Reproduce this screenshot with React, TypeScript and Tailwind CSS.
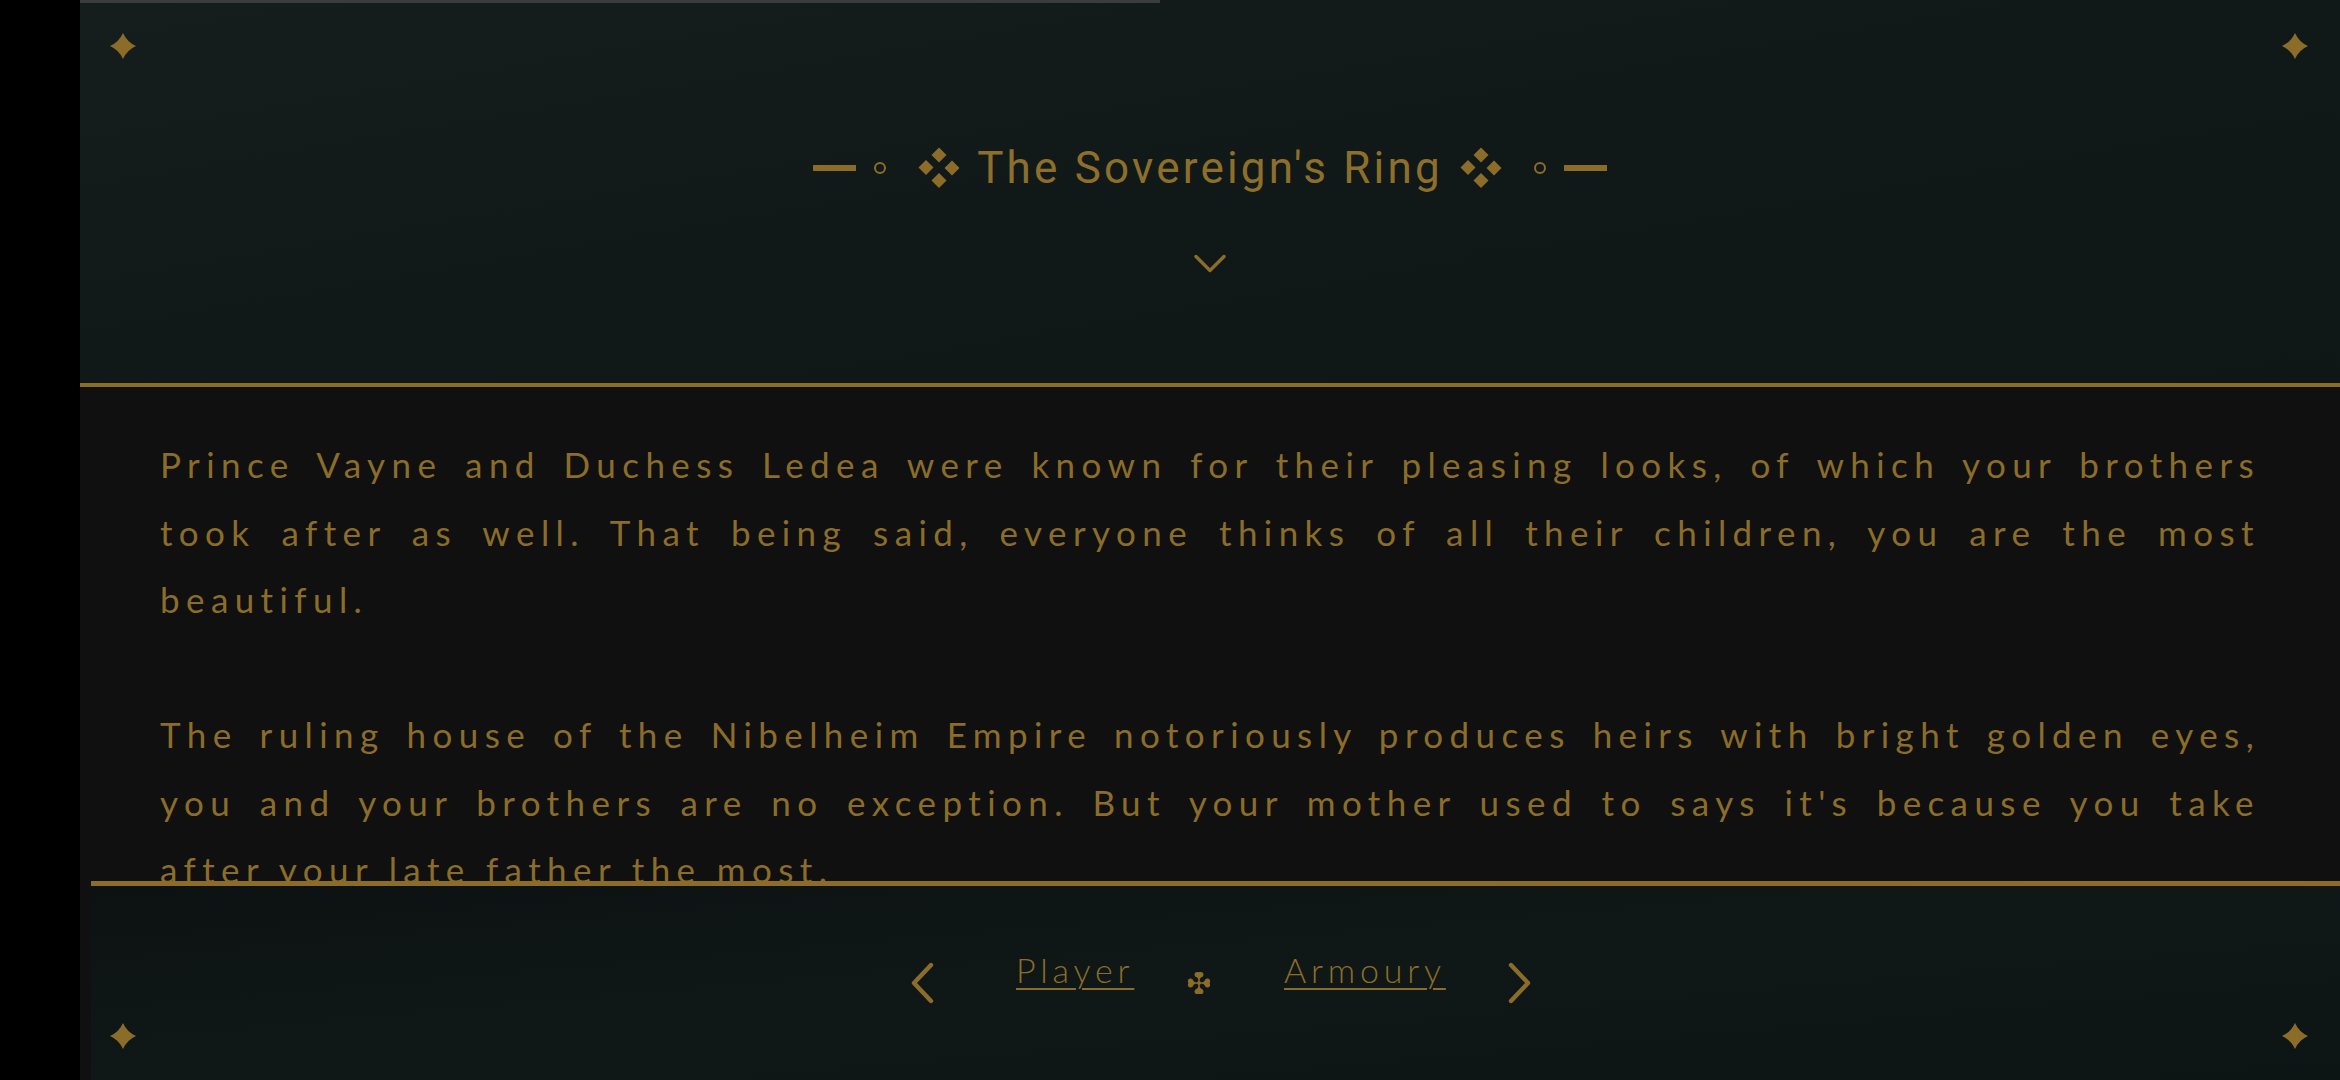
import type { ReactNode } from "react";

const gold = "#8b6d29";

function Star({ className }: { className: string }) {
  return (
    <svg
      viewBox="0 0 26 26"
      className={`absolute h-[26px] w-[26px] ${className}`}
      fill={gold}
    >
      <path d="M13 0 Q17 9 26 13 Q17 17 13 26 Q9 17 0 13 Q9 9 13 0Z" />
    </svg>
  );
}

function Diamonds() {
  // four diamonds, like ❖
  const d = (cx: number, cy: number) =>
    `M${cx} ${cy - 7.5} L${cx + 7.5} ${cy} L${cx} ${cy + 7.5} L${cx - 7.5} ${cy}Z`;
  return (
    <svg viewBox="0 0 42 42" className="h-[42px] w-[42px]" fill={gold}>
      <path d={d(21, 8)} />
      <path d={d(8, 20.5)} />
      <path d={d(34, 21)} />
      <path d={d(21, 33.5)} />
    </svg>
  );
}

function Ornament() {
  return (
    <svg viewBox="0 0 26 28" className="h-[28px] w-[26px]" fill={gold}>
      <path d="M13 3 L13 25 M3 14 L23 14" stroke={gold} strokeWidth="1.6" />
      <circle cx="11.2" cy="5.5" r="2.6" />
      <circle cx="14.8" cy="5.5" r="2.6" />
      <path d="M8.8 6.5 L13 10.5 L17.2 6.5Z" />
      <circle cx="11.2" cy="22.5" r="2.6" />
      <circle cx="14.8" cy="22.5" r="2.6" />
      <path d="M8.8 21.5 L13 17.5 L17.2 21.5Z" />
      <circle cx="4.5" cy="12.2" r="2.6" />
      <circle cx="4.5" cy="15.8" r="2.6" />
      <path d="M5.5 9.8 L9.5 14 L5.5 18.2Z" />
      <circle cx="21.5" cy="12.2" r="2.6" />
      <circle cx="21.5" cy="15.8" r="2.6" />
      <path d="M20.5 9.8 L16.5 14 L20.5 18.2Z" />
      <rect x="11.5" y="12.5" width="3" height="3" />
    </svg>
  );
}

function Line({ children, last }: { children: ReactNode; last?: boolean }) {
  return (
    <span className={`block ${last ? "" : "[text-align-last:justify]"}`}>
      {children}
    </span>
  );
}

export default function App() {
  return (
    <div className="flex h-[1080px] w-[2340px] overflow-hidden bg-black">
      <div className="w-[80px] shrink-0 bg-black" />

      <main className="relative flex flex-1 flex-col overflow-hidden bg-[#101010]">
        {/* scroll progress */}
        <div className="absolute left-0 top-0 z-10 h-[3px] w-[1080px] bg-[#3a3c3d]" />

        <header className="flex h-[387px] shrink-0 flex-col items-center border-b-4 border-[#8b6d29] bg-gradient-to-br from-[#151e1d] via-[#111918] to-[#0e1616] pt-[143px]">
          <div className="flex h-[50px] items-center">
            <div className="h-[6px] w-[43px] bg-[#8b6d29]" />
            <div className="ml-[18px] h-[12px] w-[12px] rounded-full border-2 border-[#8b6d29]" />
            <div className="ml-[32px]">
              <Diamonds />
            </div>
            <h1 className="mx-[17px] font-['Roboto',sans-serif] text-[44px] leading-none tracking-[3.2px] text-[#8d6f2b]">
              The Sovereign's Ring
            </h1>
            <Diamonds />
            <div className="ml-[32px] h-[12px] w-[12px] rounded-full border-2 border-[#8b6d29]" />
            <div className="ml-[18px] h-[6px] w-[43px] bg-[#8b6d29]" />
          </div>
          <svg viewBox="0 0 32 19" className="mt-[61px] h-[19px] w-[32px]" fill="none">
            <path d="M2 2.5 L16 16.5 L30 2.5" stroke={gold} strokeWidth="3.4" strokeLinecap="round" strokeLinejoin="round" />
          </svg>
        </header>

        <section className="flex-1 overflow-hidden px-[80px] pt-[44px] font-['Lato',sans-serif] text-[35px] leading-[67.5px] tracking-[6.4px] text-[#8b6d29]">
          <p className="mb-[67.5px] text-justify">
            <Line>Prince Vayne and Duchess Ledea were known for their pleasing looks, of which your brothers</Line>
            <Line>took after as well. That being said, everyone thinks of all their children, you are the most</Line>
            <Line last>beautiful.</Line>
          </p>
          <p className="text-justify">
            <Line>The ruling house of the Nibelheim Empire notoriously produces heirs with bright golden eyes,</Line>
            <Line>you and your brothers are no exception. But your mother used to says it's because you take</Line>
            <Line last>after your late father the most.</Line>
          </p>
        </section>

        <footer className="absolute bottom-0 left-[11px] right-0 flex h-[199px] items-center justify-center border-t-[5px] border-[#8b6d29] bg-gradient-to-br from-[#0c1212] via-[#101817] to-[#0d1414] pl-[11px] font-['Lato',sans-serif] font-light text-[#8b6d29]">
          <svg viewBox="0 0 26 42" className="h-[42px] w-[26px]" fill="none">
            <path d="M22 3 L5 21 L22 39" stroke={gold} strokeWidth="4.4" strokeLinecap="round" strokeLinejoin="round" />
          </svg>
          <a className="mb-[26px] ml-[81px] w-[124px] text-[34px] leading-[40px] tracking-[4.8px] underline decoration-2 underline-offset-[5px]">
            Player
          </a>
          <div className="ml-[46px]">
            <Ornament />
          </div>
          <a className="mb-[26px] ml-[72px] w-[166px] text-[34px] leading-[40px] tracking-[4.8px] underline decoration-2 underline-offset-[5px]">
            Armoury
          </a>
          <svg viewBox="0 0 26 42" className="ml-[57px] h-[42px] w-[26px]" fill="none">
            <path d="M4 3 L21 21 L4 39" stroke={gold} strokeWidth="4.4" strokeLinecap="round" strokeLinejoin="round" />
          </svg>
        </footer>

        <Star className="left-[30px] top-[33px]" />
        <Star className="right-[32px] top-[33px]" />
        <Star className="bottom-[31px] left-[30px]" />
        <Star className="bottom-[31px] right-[32px]" />
      </main>
    </div>
  );
}
